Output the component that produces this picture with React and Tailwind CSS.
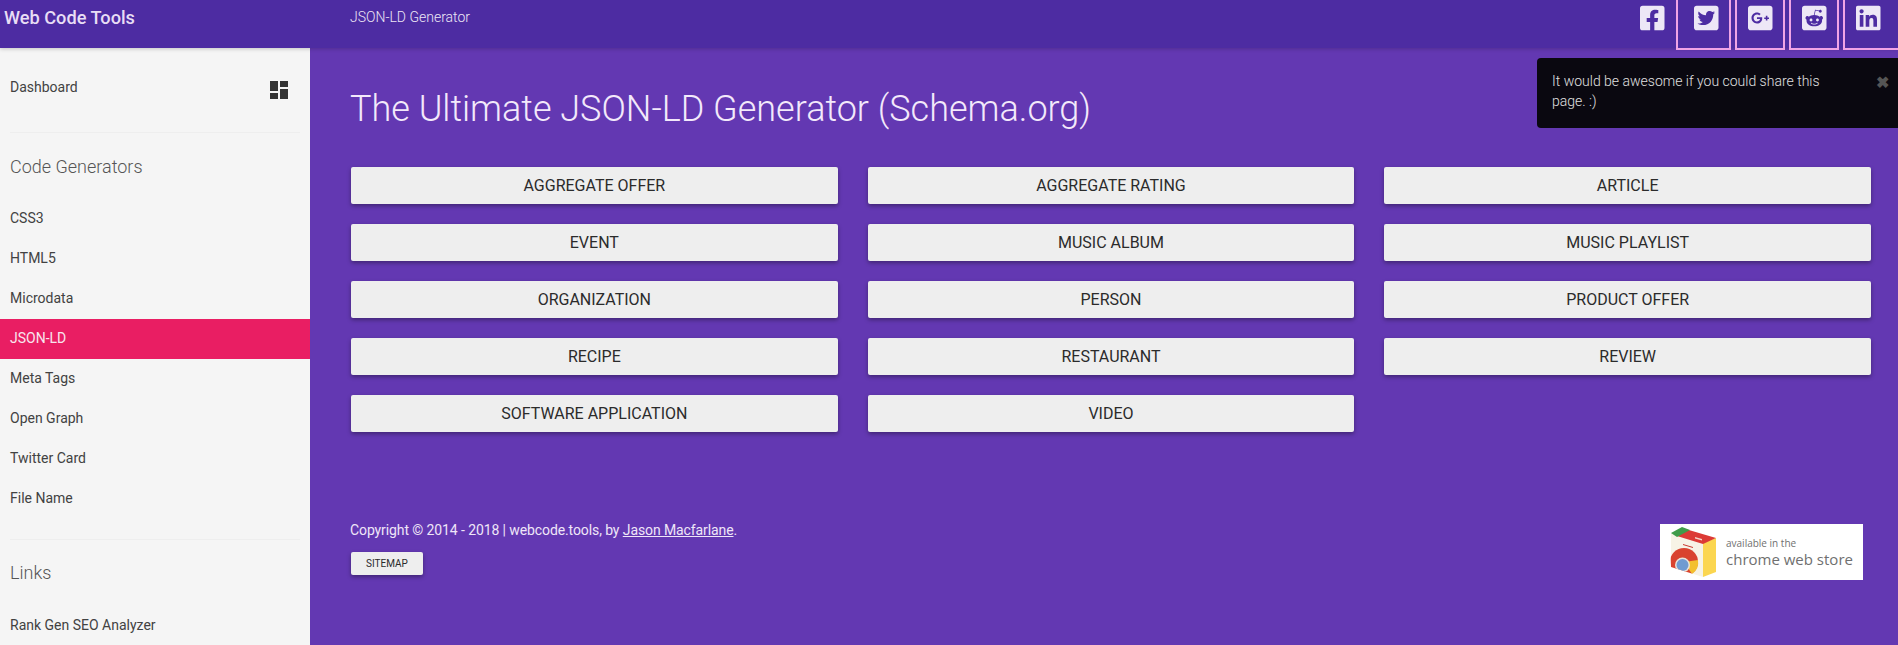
import React from "react";
import { FaFacebookSquare, FaTwitterSquare, FaGooglePlusSquare, FaRedditSquare, FaLinkedin } from "react-icons/fa";

const generators = ["CSS3", "HTML5", "Microdata", "JSON-LD", "Meta Tags", "Open Graph", "Twitter Card", "File Name"];

const schemas = [
  "Aggregate Offer", "Aggregate Rating", "Article",
  "Event", "Music Album", "Music Playlist",
  "Organization", "Person", "Product Offer",
  "Recipe", "Restaurant", "Review",
  "Software Application", "Video",
];

function ChromeBadge() {
  return (
    <div className="flex h-[56px] w-[203px] items-center bg-white">
      <svg width="58" height="56" viewBox="0 0 58 56" className="shrink-0">
        <defs>
          <clipPath id="bag-front">
            <path d="M10 20 H43 V53 L11 43 Z" />
          </clipPath>
        </defs>
        <path d="M11 9 L43 19 L43 53 L11 43 Z" fill="#f7f3e6" />
        <path d="M43 19 L56 14 L56 48 L43 53 Z" fill="#fbd650" />
        <path d="M22 4 L56 14 L43 20 L17 12 Z" fill="#dc3a35" />
        <path d="M11 9 L22 3 L30 6 L17 13 Z" fill="#3f9c4a" />
        <path d="M35 13 L42 15 L42 16.500 L35 14.500 Z" fill="#f3d5cc" />
        <path d="M23 20 L33 23 L33 24 L23 21 Z" fill="#c8382f" />
        <g clipPath="url(#bag-front)">
          <circle cx="24" cy="38" r="14" fill="#d9432f" />
          <path d="M24 38 L38 36 A14 14 0 0 1 32 50 Z" fill="#f3c02e" />
          <circle cx="22.500" cy="41" r="7.500" fill="#e8e4da" />
          <circle cx="22.500" cy="41" r="6" fill="#6f9bd1" />
        </g>
      </svg>
      <div className="ml-[8px] font-['Open_Sans',sans-serif] text-[#707070]">
        <div className="text-[10px] leading-[13px]">available in the</div>
        <div className="text-[15px] leading-[18px] whitespace-nowrap">chrome web store</div>
      </div>
    </div>
  );
}

export default function App() {
  const boxClass = "h-[50px] shrink-0 border-x-2 border-b-2 border-[#f0a4e6] pt-[4px] pl-[11px]";
  const iconClass = "h-[28px] w-[24.5px] text-[#ede7f6]";

  return (
    <div className="relative flex h-screen flex-col overflow-hidden font-['Roboto',sans-serif]">
      {/* Top bar */}
      <header className="relative z-10 flex h-[48px] shrink-0 bg-[#4d2ca2] shadow-[0_1px_4px_rgba(0,0,0,0.2)]">
        <div className="w-[350px] shrink-0 pl-[4px] pt-[5px] text-[18.2px] leading-[26px] font-medium text-[#e8def5]">Web Code Tools</div>
        <div className="flex-1 pt-[8px] text-[14px] leading-[18px] font-light text-[#ede7f6]">JSON-LD Generator</div>
        <div className="flex h-[50px] items-start">
          <a className="h-[50px] w-[36px] shrink-0 pt-[4px]"><FaFacebookSquare className={iconClass} /></a>
          <a className={`${boxClass} mr-[4px] w-[55px] pl-[16px]`}><FaTwitterSquare className={iconClass} /></a>
          <a className={`${boxClass} mr-[4px] w-[50px]`}><FaGooglePlusSquare className={iconClass} /></a>
          <a className={`${boxClass} mr-[4px] w-[50px]`}><FaRedditSquare className={iconClass} /></a>
          <a className={`${boxClass} w-[55px] border-r-0`}><FaLinkedin className={iconClass} /></a>
        </div>
      </header>

      <div className="flex min-h-0 flex-1">
        {/* Sidebar */}
        <aside className="w-[310px] shrink-0 bg-[#f5f5f5] text-[14px] text-[#424242]">
          <div className="flex items-start justify-between px-[10px] pr-[22px] pt-[29px]">
            <span className="leading-[20px]">Dashboard</span>
            <svg width="18" height="18" viewBox="3 3 18 18" className="mt-[4px] fill-[#333]">
              <path d="M3 13h8V3H3v10zm0 8h8v-6H3v6zm10 0h8V11h-8v10zm0-18v6h8V3h-8z" />
            </svg>
          </div>
          <div className="mx-[10px] mt-[33px] h-px bg-[#eeeeee]" />
          <h3 className="px-[10px] pt-[21px] text-[18px] leading-[26px] font-light text-[#555]">Code Generators</h3>
          <ul className="mt-[19px]">
            {generators.map((g) => (
              <li key={g} className={`h-[40px] px-[10px] leading-[38px] ${g === "JSON-LD" ? "bg-[#e91e63] text-[#f8e6ee]" : ""}`}>{g}</li>
            ))}
          </ul>
          <div className="mx-[10px] mt-[20px] h-px bg-[#eeeeee]" />
          <h3 className="px-[10px] pt-[20px] text-[18px] leading-[26px] font-light text-[#555]">Links</h3>
          <div className="mt-[29px] px-[10px] leading-[20px]">Rank Gen SEO Analyzer</div>
        </aside>

        {/* Main */}
        <main className="flex-1 bg-[#6338b2] pl-[41px] pr-[27px]">
          <h1 className="-ml-[1px] pt-[36px] text-[36px] leading-[50px] font-light text-[#f3e9fb]">The Ultimate JSON-LD Generator (Schema.org)</h1>
          <div className="mt-[33px] grid grid-cols-3 gap-x-[30px] gap-y-[20px]">
            {schemas.map((s) => (
              <button key={s} className="h-[37px] rounded-[2px] bg-[#eeeeee] text-[16px] text-[#2b2b2b] uppercase shadow-[0_2px_4px_rgba(0,0,0,0.35)]">{s}</button>
            ))}
          </div>
          <div className="mt-[88px] flex items-start justify-between">
            <div>
              <p className="-ml-[1px] text-[14px] leading-[20px] tracking-[-0.1px] text-[#efe6f8]">
                Copyright © 2014 - 2018 | webcode.tools, by <a className="underline">Jason Macfarlane</a>.
              </p>
              <button className="mt-[12px] block h-[23px] w-[72px] rounded-[2px] bg-[#eeeeee] text-[10px] text-[#2b2b2b] uppercase shadow-[0_2px_4px_rgba(0,0,0,0.35)]">Sitemap</button>
            </div>
            <div className="mr-[8px] mt-[4px]">
              <ChromeBadge />
            </div>
          </div>
        </main>
      </div>

      {/* Share toast */}
      <div className="absolute right-0 top-[58px] z-20 h-[70px] w-[361px] rounded-l-[4px] bg-[#0a0810] pl-[15px] pr-[60px] pt-[13px] text-[14px] leading-[20px] font-light text-[#e0e0e0]">
        It would be awesome if you could share this page. :)
        <span className="absolute right-[9px] top-[15px] text-[16px] leading-[20px] font-bold text-[#555]">✖</span>
      </div>
    </div>
  );
}
